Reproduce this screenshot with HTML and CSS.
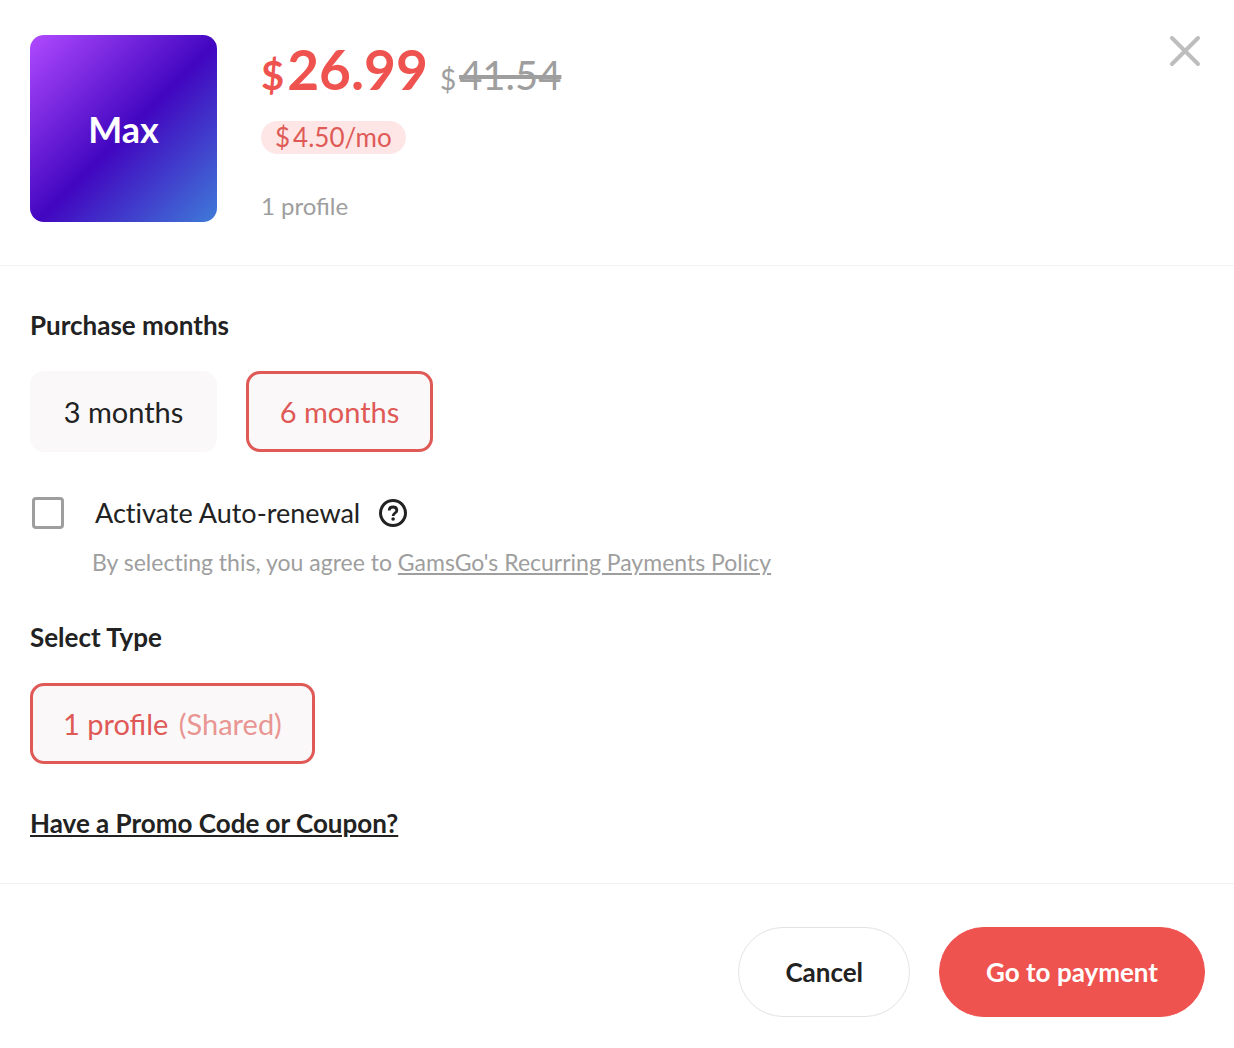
FILE: index.html
```html
<!DOCTYPE html>
<html lang="en">
<head>
  <meta charset="UTF-8" />
  <meta name="viewport" content="width=device-width, initial-scale=1" />
  <title>Max - 6 months</title>
  <link rel="stylesheet" href="styles.css">
</head>
<body>
  <main class="dialog">
    <header class="product">
      <div class="product-tile">Max</div>
      <div class="product-info">
        <div class="prices">
          <span class="price"><span class="currency">$</span>26.99</span>
          <span class="old-price"><span class="currency">$</span><s>41.54</s></span>
        </div>
        <div class="per-month"><span class="sign">$</span>4.50/mo</div>
        <div class="product-type">1 profile</div>
      </div>
      <button type="button" class="close" aria-label="Close">
        <svg width="32" height="32" viewBox="0 0 32 32" fill="none" stroke="#bdbdbd" stroke-width="4" stroke-linecap="round">
          <path d="M3 3L29 29M29 3L3 29" />
        </svg>
      </button>
    </header>

    <section class="options">
      <h2>Purchase months</h2>
      <div class="choices">
        <button type="button" class="choice">3 months</button>
        <button type="button" class="choice selected">6 months</button>
      </div>

      <div class="renewal">
        <input type="checkbox" id="renew" />
        <label for="renew">Activate Auto-renewal</label>
        <button type="button" class="help" aria-label="About auto-renewal">
          <svg width="28" height="28" viewBox="0 0 28 28" fill="none" stroke="#222" stroke-width="3">
            <circle cx="14" cy="14" r="12.5" />
            <path d="M10.2 11.6C10.2 9.3 11.8 8 14 8s3.8 1.4 3.8 3.4c0 2.5-3.7 2.8-3.7 5.6" stroke-width="2.8" />
            <circle cx="14.1" cy="20" r="1.8" fill="#222" stroke="none" />
          </svg>
        </button>
      </div>
      <p class="note">By selecting this, you agree to <a href="#">GamsGo's Recurring Payments Policy</a></p>

      <h2>Select Type</h2>
      <div class="choices">
        <button type="button" class="choice selected">1 profile <span class="shared">(Shared)</span></button>
      </div>

      <a href="#" class="promo">Have a Promo Code or Coupon?</a>
    </section>

    <footer class="actions">
      <button type="button" class="cancel">Cancel</button>
      <button type="button" class="pay">Go to payment</button>
    </footer>
  </main>
</body>
</html>
```
FILE: styles.css
```css
* {
  box-sizing: border-box;
}
body {
  margin: 0;
  background: #fff;
  color: #222;
  font-family: Lato, sans-serif;
  font-size: 26px;
  line-height: 32px;
}
button {
  font: inherit;
  color: inherit;
  cursor: pointer;
}
h2 {
  margin: 0 0 30px;
  font-size: 26px;
  font-weight: bold;
}
.product {
  display: flex;
  align-items: flex-start;
  gap: 44px;
  padding: 35px 30px 43px;
  border-bottom: 1px solid #f2f2f2;
}
.product-tile {
  display: flex;
  flex: none;
  align-items: center;
  justify-content: center;
  width: 187px;
  height: 187px;
  border-radius: 14px;
  background: linear-gradient(135deg, #b04aff 0%, #4206c0 52%, #3f7bd8 100%);
  color: #fff;
  font-size: 36px;
  font-weight: bold;
}
.product-info {
  flex: 1;
  padding-top: 4px;
}
.prices {
  display: flex;
  flex-wrap: wrap;
  align-items: baseline;
  gap: 12px;
}
.price {
  color: #ef534f;
  font-size: 55px;
  font-weight: bold;
  line-height: 60px;
}
.price .currency {
  margin-right: 3px;
  font-size: 40px;
  line-height: 1;
}
.old-price {
  color: #9e9e9e;
  font-size: 40px;
  line-height: 1;
}
.old-price .currency {
  margin-right: 3px;
  font-size: 28px;
}
.per-month {
  width: fit-content;
  margin-top: 22px;
  padding: 0 14px;
  border-radius: 17px;
  background: #fde6e5;
  color: #df5a56;
  line-height: 33px;
}
.per-month .sign {
  margin-right: 3px;
}
.product-type {
  margin-top: 36px;
  color: #9e9e9e;
  font-size: 24px;
}
.close {
  display: flex;
  margin-right: 3px;
  padding: 0;
  border: none;
  background: none;
}
.options {
  padding: 43px 30px 44px;
}
.choices {
  display: flex;
  flex-wrap: wrap;
  gap: 29px;
}
.choice {
  min-width: 187px;
  padding: 20px 30px;
  border: 3px solid #faf8f9;
  border-radius: 14px;
  background: #faf8f9;
  font-size: 29px;
  line-height: 35px;
}
.choice.selected {
  border-color: #df5a56;
  color: #df5a56;
}
.shared {
  margin-left: 3px;
  color: #e99592;
}
.renewal {
  display: flex;
  align-items: center;
  margin-top: 45px;
  font-size: 27px;
  font-variant-ligatures: none;
}
.renewal input {
  appearance: none;
  width: 32px;
  height: 32px;
  margin: 0 31px 0 2px;
  border: 3px solid #9e9e9e;
  border-radius: 4px;
  background: #fff;
}
.renewal input:checked {
  background: #ef534f;
}
.help {
  display: flex;
  margin-left: 19px;
  padding: 0;
  border: none;
  background: none;
}
.note {
  margin: 17px 0 43px 62px;
  color: #9e9e9e;
  font-size: 23px;
  font-variant-ligatures: none;
}
.note a {
  color: inherit;
}
.promo {
  display: block;
  width: fit-content;
  margin-top: 43px;
  color: inherit;
  font-weight: bold;
}
.actions {
  display: flex;
  flex-wrap: wrap;
  justify-content: flex-end;
  gap: 29px;
  padding: 43px 29px 31px;
  border-top: 1px solid #f0f0f0;
}
.actions button {
  padding: 28px 46px;
  border: 1px solid #e3e3e3;
  border-radius: 45px;
  background: #fff;
  font-weight: bold;
}
.actions .pay {
  border-color: #ef534f;
  background: #ef534f;
  color: #fff;
}
```
